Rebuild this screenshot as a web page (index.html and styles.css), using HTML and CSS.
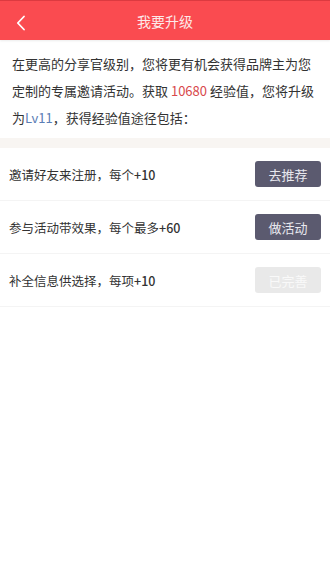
FILE: index.html
```html
<!DOCTYPE html>
<html>
<head>
<meta charset="utf-8">
<link rel="stylesheet" href="styles.css">
</head>
<body>
<div class="header">
  <div class="back">
    <svg width="14" height="16" viewBox="0 0 14 16"><path d="M10 1.5 L3.8 8 L10 14.5" fill="none" stroke="#fff" stroke-width="1.8" stroke-linecap="round" stroke-linejoin="round"/></svg>
  </div>
  <div class="title">我要升级</div>
</div>
<div class="intro">在更高的分享官级别，您将更有机会获得品牌主为您定制的专属邀请活动。获取 <span class="num">10680</span> 经验值，您将升级为<span class="lv">Lv11</span>，获得经验值途径包括：</div>
<div class="band"></div>
<div class="list">
  <div class="row"><span class="label">邀请好友来注册，每个<b>+10</b></span><span class="btn">去推荐</span></div>
  <div class="row"><span class="label">参与活动带效果，每个最多<b>+60</b></span><span class="btn">做活动</span></div>
  <div class="row"><span class="label">补全信息供选择，每项<b>+10</b></span><span class="btn disabled">已完善</span></div>
</div>
</body>
</html>
```
FILE: styles.css
```css
html, body {
  margin: 0;
  padding: 0;
  background: #fff;
  font-family: "Noto Sans CJK SC", "Noto Sans", sans-serif;
}
.header {
  height: 40px;
  background: #fa4b50;
  border-top: 1px solid #dc3a40;
  box-sizing: border-box;
  position: relative;
  display: flex;
  align-items: center;
  justify-content: center;
  box-shadow: 0 1px 2px rgba(0,0,0,0.08);
}
.back {
  position: absolute;
  left: 14px;
  top: 11px;
  width: 14px;
  height: 16px;
}
.title {
  color: #fde9e9;
  font-size: 14px;
}
.intro {
  padding: 10px 10px 7px 12px;
  font-size: 13px;
  line-height: 27px;
  color: #333;
}
.num { color: #d8484c; }
.lv { color: #5a7db5; }
.band {
  height: 10px;
  background: #f8f5f2;
}
.row {
  height: 53px;
  box-sizing: border-box;
  border-bottom: 1px solid #f4f4f4;
  display: flex;
  align-items: center;
  justify-content: space-between;
  padding: 0 9px;
}
.label {
  font-size: 12.5px;
  color: #333;
}
.label b { font-weight: 500; }
.btn {
  width: 66px;
  height: 26px;
  border-radius: 3px;
  background: #5b5a6f;
  color: #e8e8ee;
  font-size: 13px;
  display: flex;
  align-items: center;
  justify-content: center;
}
.btn.disabled {
  background: #e9e9e9;
  color: #f9f9f9;
}
```
